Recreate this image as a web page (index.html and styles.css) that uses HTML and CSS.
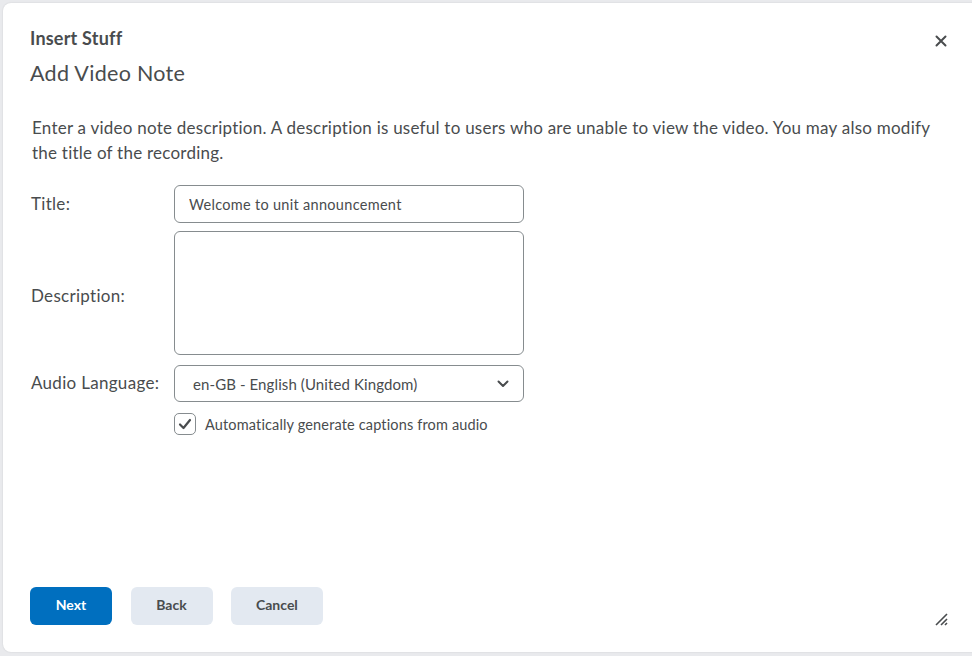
FILE: index.html
```html
<!DOCTYPE html>
<html lang="en">
<head>
    <meta charset="UTF-8">
    <meta name="viewport" content="width=device-width, initial-scale=1.0">
    <title>Add Video Note</title>
    <link rel="stylesheet" href="styles.css">
</head>
<body>
    <div class="dialog">
        <div class="dialog-header">
            <div class="titles">
                <div class="eyebrow">Insert Stuff</div>
                <h1>Add Video Note</h1>
            </div>
            <button class="close" aria-label="Close">
                <svg width="12" height="12" viewBox="0 0 12 12"><path d="M1.5 1.5 L10.5 10.5 M10.5 1.5 L1.5 10.5" stroke="#494c4e" stroke-width="2" stroke-linecap="round"/></svg>
            </button>
        </div>

        <p class="intro">Enter a video note description. A description is useful to users who are unable to view the video. You may also modify the title of the recording.</p>

        <div class="form">
            <label class="label" for="title">Title:</label>
            <input class="field" id="title" type="text" value="Welcome to unit announcement">

            <label class="label label-desc" for="desc">Description:</label>
            <textarea class="field area" id="desc"></textarea>

            <label class="label" for="lang">Audio Language:</label>
            <div class="field select" id="lang">
                <span>en-GB - English (United Kingdom)</span>
                <svg width="12" height="8" viewBox="0 0 12 8"><path d="M1.5 1.5 L6 6 L10.5 1.5" fill="none" stroke="#494c4e" stroke-width="2" stroke-linecap="round" stroke-linejoin="round"/></svg>
            </div>

            <div></div>
            <label class="check">
                <span class="box">
                    <svg width="14" height="12" viewBox="0 0 14 12"><path d="M2 6.5 L5.5 10 L12 2" fill="none" stroke="#494c4e" stroke-width="2.2" stroke-linecap="round" stroke-linejoin="round"/></svg>
                </span>
                Automatically generate captions from audio
            </label>
        </div>

        <div class="spacer"></div>

        <div class="footer">
            <button class="btn primary">Next</button>
            <button class="btn">Back</button>
            <button class="btn">Cancel</button>
            <span class="resize">
                <svg width="14" height="14" viewBox="0 0 14 14"><path d="M2 13 L13 2 M7 13 L13 7 M11 13 L13 11" stroke="#494c4e" stroke-width="1.6"/></svg>
            </span>
        </div>
    </div>
</body>
</html>
```

FILE: styles.css
```css
html, body {
    margin: 0;
    padding: 0;
    height: 100%;
    overflow: hidden;
}
body {
    background-color: #e9eaed;
    font-family: Lato, "Open Sans", sans-serif;
    color: #494c4e;
}
.dialog {
    box-sizing: border-box;
    height: 649px;
    margin: 3px -12px 0 3px;
    background: #fff;
    border-radius: 8px;
    box-shadow: 0 0 2px rgba(0, 0, 0, 0.12);
    padding: 24px 39px 0 27px;
    display: flex;
    flex-direction: column;
}
.dialog-header {
    display: flex;
    justify-content: space-between;
    align-items: flex-start;
}
.eyebrow {
    font-size: 18px;
    font-weight: 700;
    line-height: 22px;
    letter-spacing: 0.2px;
}
h1 {
    margin: 11px 0 0;
    font-size: 21.5px;
    font-weight: 400;
    line-height: 26px;
    letter-spacing: 0.3px;
}
.close {
    border: 0;
    background: none;
    padding: 0;
    margin: 8px 0 0;
    width: 12px;
    height: 12px;
    display: flex;
    cursor: pointer;
    position: relative;
    left: 2px;
}
.intro {
    margin: 29px 0 20px 2px;
    font-size: 17px;
    line-height: 25px;
    letter-spacing: 0.24px;
    max-width: 915px;
}
.form {
    display: grid;
    grid-template-columns: 144px 350px;
    row-gap: 8px;
    align-items: center;
}
.label {
    font-size: 17px;
    line-height: 22px;
    letter-spacing: 0.3px;
    padding-left: 1px;
}
.label-desc {
    position: relative;
    top: 3px;
}
.field {
    box-sizing: border-box;
    width: 350px;
    height: 38px;
    border: 1px solid #868c8f;
    border-radius: 6px;
    font-family: Lato, "Open Sans", sans-serif;
    font-size: 14.5px;
    letter-spacing: 0.3px;
    color: #494c4e;
    padding: 0 14px;
    margin: 0;
    outline: none;
}
.area {
    height: 124px;
    resize: none;
}
.select {
    display: flex;
    align-items: center;
    justify-content: space-between;
    height: 37px;
    padding: 0 14px 0 18px;
    margin-top: 2px;
    font-size: 15px;
    letter-spacing: 0.1px;
}
.check {
    display: flex;
    align-items: center;
    gap: 9px;
    font-size: 14.5px;
    letter-spacing: 0.15px;
    margin-top: 3px;
}
.box {
    box-sizing: border-box;
    width: 22px;
    height: 22px;
    border: 1px solid #868c8f;
    border-radius: 5px;
    display: flex;
    align-items: center;
    justify-content: center;
}
.spacer {
    flex: 1;
}
.footer {
    display: flex;
    align-items: center;
    gap: 18.5px;
    padding-bottom: 27px;
    position: relative;
}
.btn {
    height: 38px;
    min-width: 82px;
    padding: 0 25px 3px;
    border: 0;
    border-radius: 6px;
    background: #e3e9f1;
    color: #494c4e;
    font-family: Lato, "Open Sans", sans-serif;
    font-size: 14px;
    font-weight: 700;
    cursor: pointer;
}
.btn.primary {
    background: #006fbf;
    color: #fff;
}
.resize {
    position: absolute;
    right: -3px;
    bottom: 26px;
    display: flex;
}
```
